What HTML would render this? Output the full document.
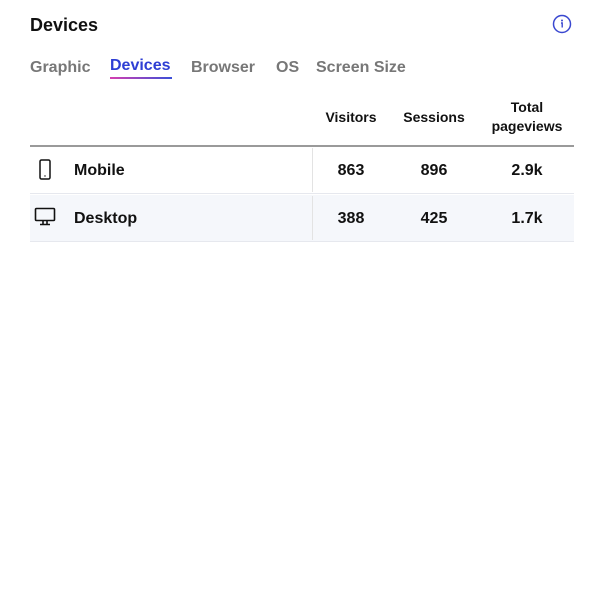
<!DOCTYPE html>
<html><head><style>
body{margin:0;width:600px;height:600px;background:#fff;font-family:"Liberation Sans",sans-serif;color:#111;position:relative}
.a{position:absolute;white-space:nowrap}
.t{font-weight:bold;font-size:16px;color:#777;top:59px}
.h{font-weight:bold;font-size:14px;text-align:center;width:100px;line-height:19px}
.n{font-weight:bold;font-size:16px;text-align:center;width:80px}
</style></head><body>
<div class="a" style="left:30px;top:15px;font-size:18px;font-weight:bold">Devices</div>
<svg class="a" style="left:552px;top:14px" width="20" height="20" viewBox="0 0 20 20"><circle cx="10" cy="10" r="8.5" fill="none" stroke="#3a48d0" stroke-width="1.5"/><circle cx="10" cy="6.5" r="1" fill="#3a48d0"/><path d="M9 9h1.2v4.5" fill="none" stroke="#3a48d0" stroke-width="1.4"/></svg>
<div class="a t" style="left:30px">Graphic</div>
<div class="a t" style="left:110px;color:#2e3ed4;top:57px">Devices</div>
<div class="a" style="left:110px;top:77px;width:62px;height:2px;background:linear-gradient(90deg,#d63fb0,#3a4fd8)"></div>
<div class="a t" style="left:191px">Browser</div>
<div class="a t" style="left:276px">OS</div>
<div class="a t" style="left:316px">Screen Size</div>
<div class="a h" style="left:301px;top:108px">Visitors</div>
<div class="a h" style="left:384px;top:108px">Sessions</div>
<div class="a h" style="left:477px;top:98px">Total<br>pageviews</div>
<div class="a" style="left:30px;top:145px;width:544px;height:2px;background:#9a9a9a"></div>
<div class="a" style="left:30px;top:193px;width:544px;height:1px;background:#e6e8ee"></div>
<div class="a" style="left:30px;top:195px;width:544px;height:46px;background:#f5f7fb"></div>
<div class="a" style="left:30px;top:241px;width:544px;height:1px;background:#e6e8ee"></div>
<div class="a" style="left:312px;top:148px;width:1px;height:44px;background:#e3e3e3"></div>
<div class="a" style="left:312px;top:196px;width:1px;height:44px;background:#e3e3e3"></div>
<svg class="a" style="left:37px;top:159px" width="16" height="22" viewBox="0 0 16 22"><rect x="3" y="1" width="10" height="19" rx="1.5" fill="none" stroke="#111" stroke-width="1.5"/><circle cx="8" cy="17" r=".7" fill="#111"/></svg>
<svg class="a" style="left:34px;top:207px" width="22" height="20" viewBox="0 0 22 20"><rect x="1.5" y="1.5" width="19" height="12" rx="1" fill="none" stroke="#111" stroke-width="1.6"/><path d="M9 14v3M13 14v3M6 17.5h10" stroke="#111" stroke-width="1.6" fill="none"/></svg>
<div class="a" style="left:74px;top:162px;font-size:16px;font-weight:bold">Mobile</div>
<div class="a" style="left:74px;top:210px;font-size:16px;font-weight:bold">Desktop</div>
<div class="a n" style="left:311px;top:162px">863</div>
<div class="a n" style="left:394px;top:162px">896</div>
<div class="a n" style="left:487px;top:162px">2.9k</div>
<div class="a n" style="left:311px;top:210px">388</div>
<div class="a n" style="left:394px;top:210px">425</div>
<div class="a n" style="left:487px;top:210px">1.7k</div>
</body></html>
